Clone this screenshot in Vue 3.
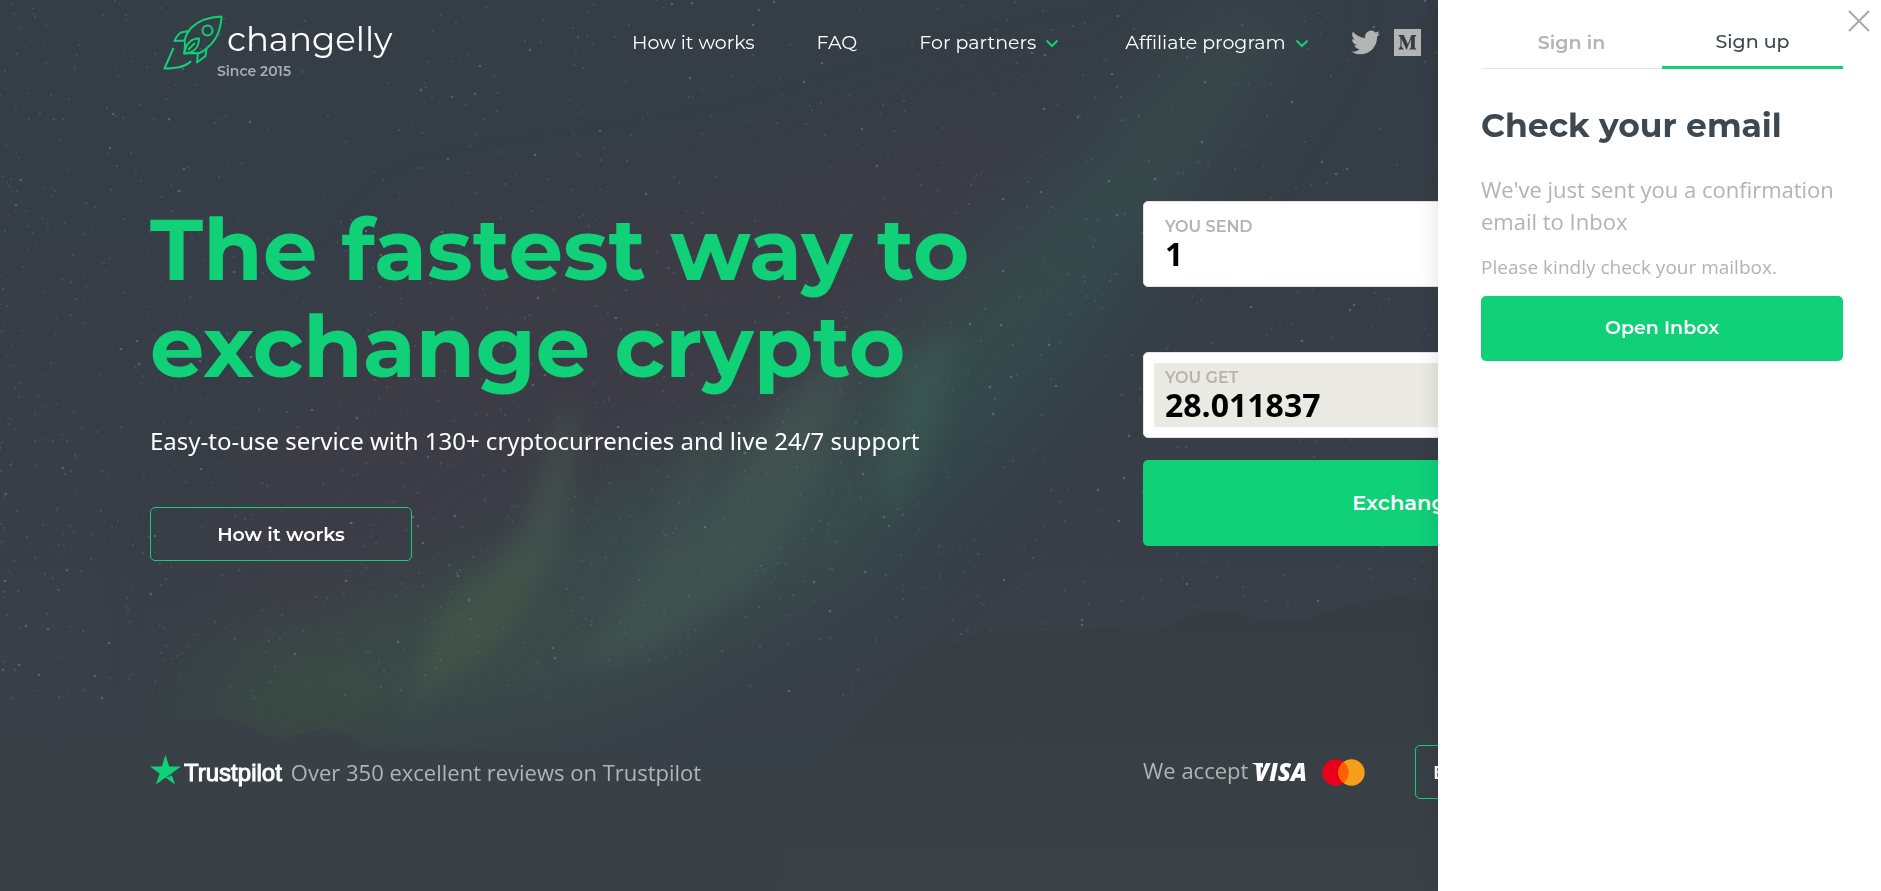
<script setup>
import { ref } from 'vue'

const activeTab = ref('signup')
const drawerOpen = ref(true)
const sendAmount = ref('1')
const getAmount = ref('28.011837')

// Seeded generator so the sky is the same on every load
let seed = 71
const random = () => {
  seed = (seed * 16807) % 2147483647
  return seed / 2147483647
}

// The sky is denser towards the left
const stars = Array.from({ length: 1900 }, (_, id) => {
  const x = Math.round(1500 * Math.pow(random(), 1.3))
  const y = Math.round(random() * 700)
  const bright = random() > 0.92
  return { id, x, y, r: bright ? 1.3 : 0.9, opacity: bright ? 0.3 : 0.08 + random() * 0.16 }
})
</script>

<template>
  <div class="page">
    <svg class="sky" viewBox="0 0 1881 891" preserveAspectRatio="xMinYMin slice" aria-hidden="true">
      <defs>
        <linearGradient id="base" x1="0" y1="0" x2="0" y2="1">
          <stop offset="0" stop-color="#353d46" />
          <stop offset="0.6" stop-color="#373e47" />
          <stop offset="1" stop-color="#3a4248" />
        </linearGradient>
        <linearGradient id="ridge" x1="0" y1="0" x2="0" y2="1">
          <stop offset="0" stop-color="#353c42" />
          <stop offset="1" stop-color="#3a4248" />
        </linearGradient>
        <filter id="soft" x="-50%" y="-50%" width="200%" height="200%" color-interpolation-filters="sRGB">
          <feGaussianBlur stdDeviation="40" />
        </filter>
        <filter id="fine" x="-50%" y="-50%" width="200%" height="200%" color-interpolation-filters="sRGB">
          <feGaussianBlur stdDeviation="12" />
        </filter>
      </defs>
      <rect width="1881" height="891" fill="url(#base)" />
      <g filter="url(#soft)">
        <path d="M440 240L760 190L1080 90L960 240L820 400L560 500L300 640L180 560Z" fill="#3e3c46" opacity="0.7" />
        <path d="M1230 0L1310 0L1180 200L1080 350L960 470L860 580L640 690L420 740L200 740L230 660L480 560L700 440L900 330L1080 170Z" fill="#3c5450" opacity="0.6" />
        <path d="M1180 120L1120 300L960 500L840 610L900 420L1020 270Z" fill="#30494c" opacity="0.5" />
        <path d="M200 640L420 590L560 560L620 610L480 710L200 750Z" fill="#3c4a40" opacity="0.5" />
      </g>
      <g filter="url(#fine)">
        <path d="M565 400L580 420L555 560L500 645L410 705L440 610L520 540Z" fill="#46594d" opacity="0.6" />
        <path d="M770 420L850 340L820 480L760 580L650 650L570 670L690 540Z" fill="#465a51" opacity="0.5" />
        <path d="M700 440L720 430L680 560L600 650L640 560Z" fill="#43564f" opacity="0.4" />
        <path d="M900 360L960 330L940 430L890 520L880 480Z" fill="#3b5e53" opacity="0.5" />
        <path d="M230 690L330 650L400 700L350 750L240 740Z" fill="#3d4b40" opacity="0.4" />
      </g>
      <circle
        v-for="star in stars"
        :key="star.id"
        :cx="star.x"
        :cy="star.y"
        :r="star.r"
        :opacity="star.opacity"
        fill="#a9b3d2"
      />
      <path
        d="M0 742L60 748L110 742L150 745L183 722L195 716L224 718L245 724L268 736L285 739L308 732L328 728L350 735L368 748L395 752L430 745L460 751L500 746L540 752L700 770L840 775V891H0Z"
        fill="#394147"
      />
      <path
        d="M790 790L840 748L860 716L890 687L910 666L921 652L960 643L980 630L1020 634L1060 631L1110 629L1145 634L1165 629L1185 616L1210 612L1230 611L1260 620L1300 622L1350 604L1400 597L1450 604L1881 620V891H780Z"
        fill="url(#ridge)"
      />
    </svg>

    <header class="header">
      <a class="logo" href="#">
        <svg class="rocket" width="60" height="57" viewBox="0 0 60 57" aria-hidden="true">
          <path d="M58.500 2.500C46 3 35 7 28 14C23 20 21 26 22 30L21.300 39.500L31 39C35 40 40 38 44 34C54 26 58 14 58.500 2.500Z" />
          <circle cx="44.500" cy="16.500" r="5" />
          <path d="M26 17L18 18.500Q14 21 11.500 27L21.500 26.500" />
          <path d="M43.500 34L42.500 42L34 48.500L35 39" />
          <path d="M36 24.500C29 24 23 29 21.300 39.500C30 39 36 34 36 24.500ZM32 29L25 36" />
          <path d="M10.500 34L1.500 54.500C12 54.500 23 53 28 47" />
        </svg>
        <span class="brand">changelly</span>
        <span class="since">Since 2015</span>
      </a>

      <nav class="nav">
        <a href="#">How it works</a>
        <a href="#">FAQ</a>
        <a href="#">
          For partners
          <svg class="chevron" width="14" height="9" viewBox="0 0 14 9" aria-hidden="true"><path d="M1.500 1.500L7 7L12.500 1.500" /></svg>
        </a>
        <a href="#">
          Affiliate program
          <svg class="chevron" width="14" height="9" viewBox="0 0 14 9" aria-hidden="true"><path d="M1.500 1.500L7 7L12.500 1.500" /></svg>
        </a>
      </nav>

      <div class="social">
        <a href="#" aria-label="Twitter">
          <svg width="29" height="29" viewBox="0 0 24 24" aria-hidden="true">
            <path d="M23.950 4.570a10 10 0 0 1-2.820.770 4.960 4.960 0 0 0 2.160-2.720c-.950.550-2 .950-3.130 1.180a4.920 4.920 0 0 0-8.380 4.480C7.690 8.090 4.070 6.130 1.640 3.160a4.820 4.820 0 0 0-.670 2.480c0 1.710.870 3.210 2.190 4.100a4.900 4.900 0 0 1-2.230-.620v.060a4.920 4.920 0 0 0 3.950 4.830 5 5 0 0 1-2.210.080 4.940 4.940 0 0 0 4.600 3.420A9.870 9.870 0 0 1 0 19.540a13.990 13.990 0 0 0 7.550 2.210c9.050 0 14-7.500 14-13.980 0-.210 0-.420-.020-.630a9.940 9.940 0 0 0 2.460-2.550z" />
          </svg>
        </a>
        <a href="#" aria-label="Medium">
          <svg width="27" height="27" viewBox="0 0 24 24" aria-hidden="true">
            <path d="M0 0v24h24V0zm19.940 5.690L18.650 6.920a.380.380 0 0 0-.140.360v9.070a.380.380 0 0 0 .140.360l1.260 1.230v.270h-6.320v-.270l1.300-1.260c.130-.130.130-.170.130-.360V8.990l-3.620 9.190h-.490L6.700 8.990v6.160c-.040.260.050.520.230.710l1.690 2.050v.270H3.820v-.270l1.690-2.050a.820.820 0 0 0 .220-.710V8.030a.620.620 0 0 0-.200-.530L4.030 5.690v-.270h4.670l3.610 7.920 3.170-7.920h4.460z" />
          </svg>
        </a>
      </div>
    </header>

    <main class="hero">
      <section class="intro">
        <h1>The fastest way to exchange crypto</h1>
        <p>Easy-to-use service with 130+ cryptocurrencies and live 24/7 support</p>
        <button type="button" class="outline-button">How it works</button>
      </section>

      <form class="exchange" @submit.prevent>
        <div class="field">
          <div class="field-inner">
            <label for="send">YOU SEND</label>
            <input id="send" v-model="sendAmount" type="text">
          </div>
        </div>
        <div class="field field-get">
          <div class="field-inner muted">
            <label for="get">YOU GET</label>
            <input id="get" v-model="getAmount" type="text" readonly>
          </div>
        </div>
        <button type="submit" class="solid-button exchange-button">Exchange coins</button>
      </form>
    </main>

    <footer class="bottom">
      <div class="reviews">
        <svg class="star" width="31" height="30" viewBox="0 0 31 30" aria-hidden="true">
          <path d="M15.500 0L19.200 11.400H31L21.400 18.400L25 29.500L15.500 22.600L6 29.500L9.600 18.400L0 11.400H11.800Z" fill="#10d078" />
          <path d="M22.200 21L15.500 22.600L21.400 18.400Z" fill="#2c5f4e" />
        </svg>
        <span class="trustpilot">Trustpilot</span>
        <a href="#">Over 350 excellent reviews on Trustpilot</a>
      </div>
      <div class="payments">
        <span class="accept">We accept</span>
        <span class="visa">VISA</span>
        <svg class="mastercard" width="43" height="27" viewBox="0 0 43 27" aria-hidden="true">
          <circle cx="13.500" cy="13.500" r="13.200" fill="#eb001b" />
          <circle cx="29.500" cy="13.500" r="13.200" fill="#f79e1b" />
          <path d="M21.500 3A13.200 13.200 0 0 1 21.500 24A13.200 13.200 0 0 1 21.500 3Z" fill="#ff5f00" />
        </svg>
        <button type="button" class="outline-button buy-button">Buy crypto with credit card</button>
      </div>
    </footer>

    <aside v-if="drawerOpen" class="drawer">
      <button type="button" class="close" aria-label="Close" @click="drawerOpen = false">
        <svg width="22" height="22" viewBox="0 0 22 22" aria-hidden="true"><path d="M1 1L21 21M21 1L1 21" /></svg>
      </button>
      <div class="tabs">
        <button type="button" :class="{ active: activeTab === 'signin' }" @click="activeTab = 'signin'">Sign in</button>
        <button type="button" :class="{ active: activeTab === 'signup' }" @click="activeTab = 'signup'">Sign up</button>
      </div>
      <h2>Check your email</h2>
      <p class="lead">We've just sent you a confirmation email to Inbox</p>
      <p class="note">Please kindly check your mailbox.</p>
      <button type="button" class="solid-button inbox-button">Open Inbox</button>
    </aside>
  </div>
</template>

<style>
body {
  margin: 0;
  background: #3a4248;
}
</style>

<style scoped>
.page {
  position: relative;
  min-height: 100vh;
  overflow: hidden;
  color: #fff;
  font-family: 'Open Sans', 'Noto Sans', sans-serif;
}

.page *,
.page {
  box-sizing: border-box;
}

button,
.brand,
.since,
.nav,
h1,
h2,
label {
  font-family: Montserrat, Inter, sans-serif;
}

button {
  cursor: pointer;
}

a {
  color: inherit;
  text-decoration: none;
}

svg {
  flex: none;
}

.sky {
  position: absolute;
  inset: 0;
  width: 100%;
  height: 100%;
}

.header,
.hero,
.bottom {
  position: relative;
  margin: 0 150px;
}

/* Header */
.header {
  display: flex;
  align-items: center;
  height: 85px;
}

.logo {
  display: grid;
  grid-template-columns: 64px 1fr;
  width: 482px;
  padding: 6px 0 0 13px;
}

.rocket {
  grid-row: 1 / 3;
  fill: none;
  stroke: #10d078;
  stroke-width: 2;
  stroke-linejoin: round;
}

.brand {
  font-size: 34px;
  font-weight: 400;
  line-height: 50px;
}

.since {
  margin-left: -10px;
  color: #a9adb0;
  font-size: 14px;
  font-weight: 600;
  line-height: 14px;
}

.nav {
  display: flex;
  gap: 62px;
  font-size: 19px;
  line-height: 24px;
  white-space: nowrap;
}

.chevron {
  margin: 0 4px;
  vertical-align: middle;
  fill: none;
  stroke: #10d078;
  stroke-width: 2;
}

.social {
  display: flex;
  align-items: center;
  gap: 14px;
  margin-left: 38px;
}

.social a {
  display: flex;
}

.social svg {
  fill: #b3b5b5;
}

/* Hero */
.hero {
  display: grid;
  grid-template-columns: minmax(0, 1fr) 588px;
  padding-top: 116px;
}

h1 {
  max-width: 880px;
  margin: 0;
  color: #10d078;
  font-size: 86px;
  font-weight: 700;
  line-height: 97px;
}

.intro p {
  margin: 28px 0 48px;
  font-family: 'Noto Sans', 'Open Sans', sans-serif;
  font-size: 24px;
  line-height: 36px;
}

.outline-button {
  width: 262px;
  height: 54px;
  padding: 0 17px;
  border: 1px solid #10d078;
  border-radius: 5px;
  background: transparent;
  color: #fff;
  font-size: 19px;
  font-weight: 600;
  white-space: nowrap;
}

.solid-button {
  width: 100%;
  padding: 0 0 2px;
  border: 0;
  border-radius: 5px;
  background: #10d078;
  color: #fff;
  font-weight: 600;
}

.field {
  height: 86px;
  padding: 10px;
  border: 1px solid #e3e3e3;
  border-radius: 5px;
  background: #fff;
}

.field-get {
  margin: 65px 0 22px;
}

.field-inner {
  height: 100%;
  padding: 5px 11px 0;
}

.muted {
  background: #eaeae2;
}

label {
  display: block;
  color: #b3b3b3;
  font-size: 16px;
  font-weight: 600;
  line-height: 20px;
}

input {
  display: block;
  width: 100%;
  height: 34px;
  padding: 0;
  border: 0;
  outline: 0;
  background: transparent;
  color: #000;
  font: 700 32px/34px 'Open Sans', 'Noto Sans', sans-serif;
}

.exchange-button {
  height: 86px;
  font-size: 21px;
}

/* Bottom row */
.bottom {
  display: grid;
  grid-template-columns: minmax(0, 1fr) 588px;
  align-items: center;
  margin-top: 184px;
  padding-bottom: 92px;
  color: #b3b3b3;
  font-size: 22px;
  line-height: 30px;
}

.reviews,
.payments {
  display: flex;
  align-items: center;
}

.star {
  margin-bottom: 4px;
}

.trustpilot {
  margin: 2px 9px 0 3px;
  color: #fff;
  font-family: 'Liberation Sans', Arial, sans-serif;
  font-size: 24px;
  -webkit-text-stroke: 1px #fff;
}

.accept {
  padding-bottom: 4px;
}

.visa {
  position: relative;
  margin-left: 6px;
  color: #fff;
  font-size: 24px;
  font-style: italic;
  font-weight: 800;
}

/* Wing on the left stroke of the V */
.visa::before {
  content: '';
  position: absolute;
  top: 6px;
  left: -3px;
  width: 12px;
  height: 5px;
  background: #fff;
  clip-path: polygon(0 0, 100% 0, 100% 100%);
}

.mastercard {
  margin: 0 50px 0 15px;
}

.buy-button {
  flex: 1;
  text-align: left;
}

/* Drawer */
.drawer {
  position: fixed;
  top: 0;
  right: 0;
  bottom: 0;
  width: 443px;
  padding: 16px 38px 0 43px;
  background: #fff;
  box-shadow: 0 0 20px rgba(0, 0, 0, 0.12);
  color: #b3b3b3;
}

.close {
  position: absolute;
  top: 10px;
  right: 11px;
  display: flex;
  padding: 0;
  border: 0;
  background: none;
}

.close path {
  stroke: #a9a9a9;
  stroke-width: 2;
}

.tabs {
  display: grid;
  grid-template-columns: 1fr 1fr;
  height: 53px;
}

.tabs button {
  padding: 0;
  border: 0;
  border-bottom: 1px solid #e3e3e3;
  background: none;
  color: #b3b3b3;
  font-size: 19px;
  font-weight: 600;
}

.tabs .active {
  border-bottom: 3px solid #10d078;
  color: #3d4850;
  font-weight: 500;
}

h2 {
  margin: 34px 0 26px;
  color: #3d4850;
  font-size: 33px;
  font-weight: 700;
  line-height: 44px;
}

.lead {
  margin: 0 0 15px;
  font-size: 22px;
  line-height: 32px;
}

.note {
  margin: 0 0 14px;
  font-size: 19px;
  line-height: 30px;
}

.inbox-button {
  height: 65px;
  font-size: 19px;
}
</style>
